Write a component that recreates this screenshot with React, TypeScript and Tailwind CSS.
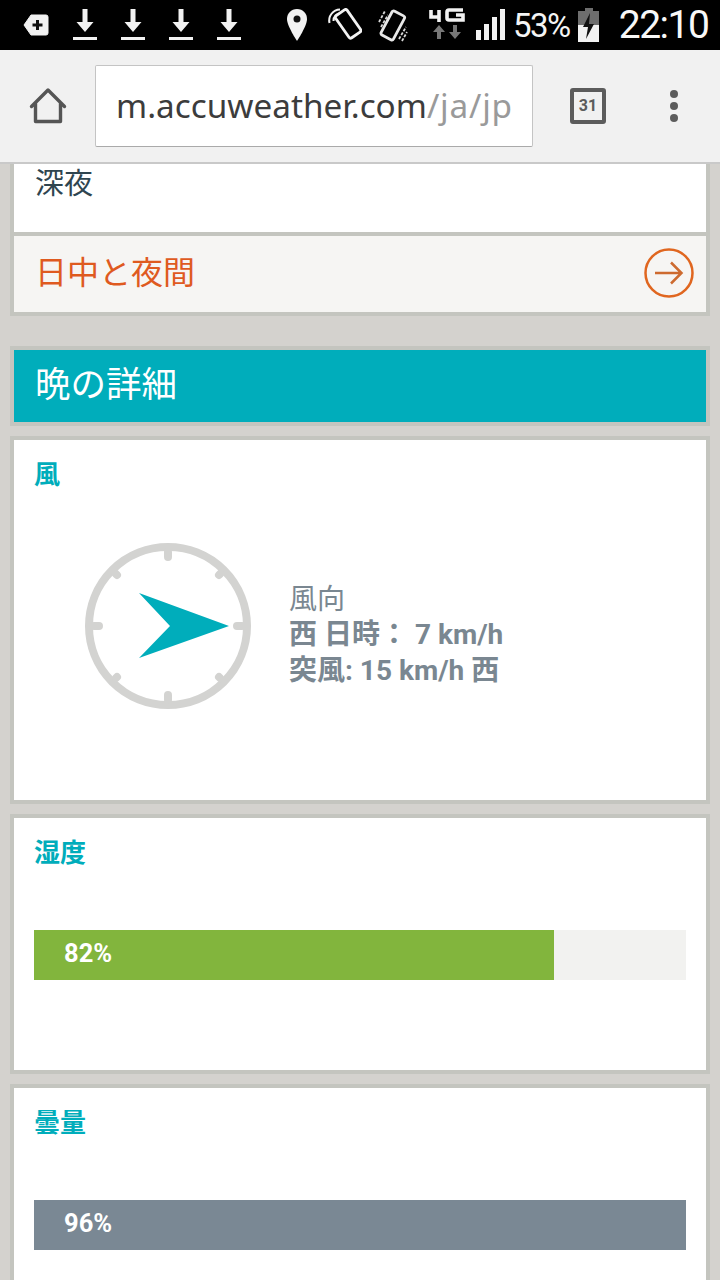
import React from "react";

const DownloadIcon = () => (
  <svg width="26" height="34" viewBox="0 0 26 34" className="shrink-0">
    <path d="M10.5 1h5v13h6L13 24 4.500 14h6z" fill="#f2f2f2" />
    <rect x="1" y="29" width="24" height="3" fill="#f2f2f2" />
  </svg>
);

const Section = ({ title, className, children }: { title: string; className: string; children?: React.ReactNode }) => (
  <section className={`mx-2.5 border-4 border-[#c4c5bf] bg-white ${className}`}>
    <h3 className="pl-[20px] pt-[20px] text-[26px] leading-[30px] font-bold text-[#00adbb]">{title}</h3>
    {children}
  </section>
);

const Bar = ({ label, pct, color }: { label: string; pct: number; color: string }) => (
  <div className="mx-[20px] mt-[62px] h-[50px] bg-[#f2f2f0]">
    <div className="flex h-full items-center pl-[30px]" style={{ width: `${pct}%`, backgroundColor: color }}>
      <span className="mb-[3px] text-[25.500px] font-bold text-white">{label}</span>
    </div>
  </div>
);

export default function App() {
  return (
    <div
      className="h-[1280px] w-[720px] overflow-hidden bg-[#d4d2ce]"
      style={{ fontFamily: 'Roboto, "Noto Sans CJK JP", sans-serif' }}
    >
      <header className="flex h-[50px] items-center bg-black text-[#f2f2f2]">
        <svg width="26" height="22" viewBox="0 0 26 22" className="ml-[23px] shrink-0">
          <path d="M8 1h15a2 2 0 0 1 2 2v16a2 2 0 0 1-2 2H8L1 11z" fill="#f2f2f2" stroke="#f2f2f2" strokeLinejoin="round" />
          <path d="M9.500 11h10M14.500 6v10" stroke="#111" strokeWidth="3" />
        </svg>
        <div className="ml-[23px] flex gap-[22px]">
          <DownloadIcon />
          <DownloadIcon />
          <DownloadIcon />
          <DownloadIcon />
        </div>
        <svg width="22" height="34" viewBox="0 0 22 34" className="ml-[44px] shrink-0">
          <path d="M11 1C5 1 1 5.500 1 11c0 7 10 22 10 22s10-15 10-22C21 5.500 17 1 11 1z" fill="#f2f2f2" />
          <circle cx="11" cy="11" r="3.500" fill="#111" />
        </svg>
        <svg width="36" height="34" viewBox="0 0 36 34" className="ml-[18px] shrink-0">
          <path d="M14 1.500A11 11 0 0 0 3.500 15" fill="none" stroke="#f2f2f2" strokeWidth="2" />
          <path d="M15 5.500A7 7 0 0 0 7.500 13" fill="none" stroke="#f2f2f2" strokeWidth="2" />
          <rect x="15" y="3" width="14" height="27" rx="2" transform="rotate(-35 21 16)" fill="#000" stroke="#f2f2f2" strokeWidth="2.800" />
        </svg>
        <svg width="30" height="34" viewBox="0 0 30 34" className="ml-[16px] shrink-0">
          <rect x="8" y="4" width="14" height="27" rx="2" transform="rotate(28 15 17)" fill="none" stroke="#e8e8e8" strokeWidth="2.800" />
          <path d="M1 14 7 3M3 19 10 7M21 31 28 19M24 33 29 24" stroke="#d8d8d8" strokeWidth="1.800" strokeDasharray="3 1.500" />
        </svg>
        <svg width="36" height="34" viewBox="0 0 36 34" className="ml-[21px] shrink-0">
          <path d="M2 2v7h8M10 2v12" fill="none" stroke="#f2f2f2" strokeWidth="3.600" />
          <path d="M34 2H20a2 2 0 0 0-2 2v6a2 2 0 0 0 2 2h14V7h-7" fill="none" stroke="#f2f2f2" strokeWidth="3.600" />
          <path d="M10 17l6 7h-4v7H8v-7H4zM26 31l-6-7h4v-7h4v7h4z" fill="#777" />
        </svg>
        <svg width="30" height="32" viewBox="0 0 30 32" className="ml-[11px] shrink-0">
          <rect x="0" y="21" width="5" height="10" fill="#f2f2f2" />
          <rect x="8" y="15" width="5" height="16" fill="#f2f2f2" />
          <rect x="16" y="8" width="5" height="23" fill="#f2f2f2" />
          <rect x="24" y="0" width="5" height="31" fill="#f2f2f2" />
        </svg>
        <span className="ml-[7px] text-[33px] leading-none tracking-[-1.500px] text-[#f5f5f5]">53%</span>
        <svg width="22" height="34" viewBox="0 0 22 34" className="ml-[8px] shrink-0">
          <path d="M7 0h8v3h6v31H0V3h7z" fill="#6e6e6e" />
          <path d="M0 17h21v17H0z" fill="#f2f2f2" />
          <path d="M12 5 5 19h5l-2 12 8-15h-5z" fill="#111" />
        </svg>
        <span className="ml-[19px] text-[39px] leading-none tracking-[-1.500px] text-[#f8f8f8]">22:10</span>
      </header>

      <nav className="flex h-[114px] items-center border-b-2 border-[#c9c9c9] bg-[#f1f1f1]">
        <svg width="38" height="38" viewBox="0 0 38 38" className="ml-[29px] shrink-0">
          <path d="M2.500 19.500 19 3l16.500 16.500M6.500 16v18.500h25V16" fill="none" stroke="#555" strokeWidth="3.400" strokeLinejoin="round" strokeLinecap="round" />
        </svg>
        <div
          className="ml-[28px] flex h-[82px] w-[438px] items-center rounded-[2px] border border-[#c4c4c4] border-b-[#aaa] bg-white pl-[20px] text-[33.300px] whitespace-nowrap"
          style={{ fontFamily: '"Noto Sans", sans-serif' }}
        >
          <span className="text-[#3c3c3c]">m.accuweather.com</span>
          <span className="tracking-[0.800px] text-[#9a9a9a]">/ja/jp</span>
        </div>
        <div className="ml-[37px] flex h-[36px] w-[36px] shrink-0 items-center justify-center rounded-[3px] border-[4px] border-[#5c5c5c] text-[16px] font-bold text-[#5c5c5c]">
          31
        </div>
        <div className="ml-[64px] flex flex-col gap-[4px]">
          <span className="h-[8px] w-[8px] rounded-full bg-[#5c5c5c]" />
          <span className="h-[8px] w-[8px] rounded-full bg-[#5c5c5c]" />
          <span className="h-[8px] w-[8px] rounded-full bg-[#5c5c5c]" />
        </div>
      </nav>

      <main>
        <div className="mx-2.5 h-[68px] border-x-4 border-[#c4c5bf] bg-white pl-[21px] text-[29px] leading-[40px] text-[#2f4550]">
          深夜
        </div>
        <div className="mx-2.5 flex h-[84px] items-center justify-between border-4 border-[#c4c5bf] bg-[#f6f5f3] pr-[12px] pl-[21px] text-[#df5a1f]">
          <span className="mb-[3px] text-[32px] leading-none">日中と夜間</span>
          <svg width="50" height="50" viewBox="0 0 50 50" className="mb-[2px]">
            <circle cx="25" cy="25" r="23.500" fill="none" stroke="#e0661f" strokeWidth="2.500" />
            <path d="M11 25h26M27 14.500 37.500 25 27 35.500" fill="none" stroke="#cd6a2f" strokeWidth="2.500" />
          </svg>
        </div>

        <div className="mx-2.5 mt-[30px] flex h-[80px] items-center border-4 border-[#c4c5bf] bg-[#00adbb] pl-[21px] text-[35.500px] leading-none text-white">
          晩の詳細
        </div>

        <Section title="風" className="mt-[10px] h-[368px]">
          <div className="mt-[52px] flex items-center pl-[70px]">
            <svg width="168" height="168" viewBox="0 0 168 168" className="shrink-0">
              <circle cx="84" cy="84" r="79" fill="none" stroke="#d3d3d1" strokeWidth="8" />
              <g stroke="#d3d3d1" strokeWidth="8" strokeLinecap="round">
                <path d="M84 10v5M84 153v5M10 84h5M153 84h5M32 32l1 1M136 32l-1 1M32 136l1-1M136 136l-1-1" />
              </g>
              <path d="M55 51 145 84 55 116 86 84z" fill="#00adbb" />
            </svg>
            <div className="mt-[18px] ml-[37px] text-[28px] leading-[35.500px] font-bold whitespace-nowrap text-[#7a8791]">
              <div className="font-normal">風向</div>
              <div>西 日時： 7 km/h</div>
              <div>突風: 15 km/h 西</div>
            </div>
          </div>
        </Section>

        <Section title="湿度" className="mt-[10px] h-[260px]">
          <Bar label="82%" pct={79.800} color="#82b53d" />
        </Section>

        <Section title="曇量" className="mt-[10px] h-[260px]">
          <Bar label="96%" pct={100} color="#7a8894" />
        </Section>
      </main>
    </div>
  );
}
